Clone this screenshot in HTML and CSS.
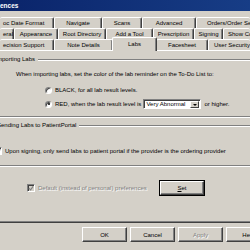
FILE: index.html
```html
<!DOCTYPE html>
<html>
<head>
<meta charset="utf-8">
<link rel="stylesheet" href="styles.css">
</head>
<body>
<div class="titlebar">ences</div>
<div class="tabs">
  <div class="tabrow">
    <div class="tab t1a clip">oc Date Format</div>
    <div class="tab t1b">Navigate</div>
    <div class="tab t1c">Scans</div>
    <div class="tab t1d">Advanced</div>
    <div class="tab t1e open">Orders/Order Sets</div>
  </div>
  <div class="tabrow">
    <div class="tab t2a clip">eral</div>
    <div class="tab t2b">Appearance</div>
    <div class="tab t2c">Root Directory</div>
    <div class="tab t2d">Add a Tool</div>
    <div class="tab t2e">Prescription</div>
    <div class="tab t2f">Signing</div>
    <div class="tab t2g open">Show Codes</div>
  </div>
  <div class="tabrow last">
    <div class="tab t3a clip">ecision Support</div>
    <div class="tab t3b">Note Details</div>
    <div class="tab t3c active">Labs</div>
    <div class="tab t3d">Facesheet</div>
    <div class="tab t3e open">User Security</div>
  </div>
</div>
<div class="panel">
  <div class="group g1">
    <div class="group-title">mporting Labs</div>
    <div class="line intro">When importing labs, set the color of the lab reminder on the To-Do List to:</div>
    <div class="line opt1"><span class="radio"></span>BLACK, for all lab result levels.</div>
    <div class="line opt2"><span class="radio on"></span>RED, when the lab result level is
      <span class="select"><span class="sel-text">Very Abnormal</span><span class="sel-btn"><span class="arrow"></span></span></span>
      or higher.</div>
  </div>
  <div class="group g2">
    <div class="group-title">Sending Labs to PatientPortal</div>
    <div class="line chk-line"><span class="check"><svg width="7" height="7" viewBox="0 0 7 7"><path d="M1 3 L3 5 L6 1" stroke="#000" stroke-width="1.3" fill="none"/></svg></span>Upon signing, only send labs to patient portal if the provider is the ordering provider</div>
  </div>
  <div class="default-row">
    <span class="check disabled"><svg width="7" height="7" viewBox="0 0 7 7"><path d="M1 3 L3 5 L6 1" stroke="#808080" stroke-width="1.3" fill="none"/></svg></span>
    <span class="dis-text">Default (instead of personal) preferences</span>
    <span class="btn set"><u>S</u>et</span>
  </div>
</div>
<div class="buttons">
  <span class="btn ok">OK</span>
  <span class="btn">Cancel</span>
  <span class="btn dis">Apply</span>
  <span class="btn">Help</span>
</div>
</body>
</html>
```
FILE: styles.css
```css
html, body {
  margin: 0;
  padding: 0;
}
body {
  width: 250px;
  height: 250px;
  overflow: hidden;
  background: #d4d0c8;
  font-family: "Liberation Sans", Arial, sans-serif;
  font-size: 6px;
  color: #000;
}
.titlebar {
  height: 11px;
  line-height: 11px;
  background: linear-gradient(to right, #0a246a, #173d86);
  color: #fff;
  font-weight: bold;
  font-size: 6.5px;
  padding-left: 0;
}
.tabs {
  margin-top: 6px;
}
.tabrow {
  display: flex;
  height: 11px;
  white-space: nowrap;
}
.tabrow.last {
  height: 11px;
  position: relative;
  z-index: 1;
}
.tab {
  box-sizing: border-box;
  height: 11px;
  flex: none;
  border-top: 1px solid #fff;
  border-left: 1px solid #fff;
  border-right: 1px solid #404040;
  box-shadow: inset -1px 0 0 #808080;
  border-radius: 2px 2px 0 0;
  text-align: center;
  line-height: 10px;
  overflow: hidden;
  background: #d4d0c8;
}
.tab.clip {
  border-left: none;
  text-align: left;
  padding-left: 3px;
}
.tab.open {
  flex: 1;
  border-right: none;
  box-shadow: none;
  text-align: left;
}
.t1a { width: 54px; }
.t1b { width: 48px; }
.t1c { width: 40px; }
.t1d { width: 54px; }
.t1e { padding-left: 10px; }
.t2a { width: 14px; padding-left: 0; }
.t2b { width: 44px; }
.t2c { width: 48px; }
.t2d { width: 47px; }
.t2e { width: 41px; }
.t2f { width: 29px; }
.t2g { padding-left: 4px; }
.t3a { width: 54px; }
.t3b { width: 59px; }
.t3c { width: 43px; }
.t3d { width: 52px; }
.t3e { padding-left: 5px; }
.tab.active {
  width: 45px;
  margin: -2px -1px -1px -1px;
  height: 14px;
  line-height: 12px;
  position: relative;
  z-index: 2;
}
.panel {
  border-top: 1px solid #fff;
  height: 173px;
  box-sizing: border-box;
  border-bottom: 1px solid #404040;
  box-shadow: inset 0 -1px 0 #808080;
  padding-top: 5px;
}
.group {
  border-bottom: 1px solid #808080;
  box-shadow: 0 1px 0 #fff;
  margin-left: -3px;
}
.group-title {
  display: flex;
  align-items: center;
  height: 7px;
  line-height: 7px;
  gap: 3px;
  white-space: nowrap;
}
.group-title::after {
  content: "";
  flex: 1;
  height: 0;
  border-top: 1px solid #808080;
  border-bottom: 1px solid #fff;
}
.line {
  display: flex;
  align-items: center;
  white-space: nowrap;
}
.g1 {
  height: 61px;
  box-sizing: border-box;
}
.intro {
  margin-top: 7px;
  padding-left: 19px;
  height: 8px;
}
.opt1 {
  margin-top: 8px;
  padding-left: 48px;
  height: 8px;
}
.opt2 {
  margin-top: 5px;
  padding-left: 48px;
  height: 10px;
}
.radio {
  box-sizing: border-box;
  width: 7px;
  height: 7px;
  border-radius: 50%;
  background: #fff;
  border: 1px solid;
  border-color: #808080 #fff #fff #808080;
  box-shadow: inset 1px 1px 0 #404040;
  margin-right: 3px;
  display: inline-flex;
  align-items: center;
  justify-content: center;
}
.radio.on::after {
  content: "";
  width: 2px;
  height: 2px;
  border-radius: 50%;
  background: #000;
}
.select {
  display: inline-flex;
  box-sizing: border-box;
  width: 58px;
  height: 10px;
  margin: 0 3px 0 2px;
  background: #fff;
  border: 1px solid;
  border-color: #808080 #fff #fff #808080;
  box-shadow: inset 1px 1px 0 #404040;
  padding: 1px 1px 1px 2px;
}
.sel-text {
  flex: 1;
  line-height: 7px;
}
.sel-btn {
  box-sizing: border-box;
  width: 9px;
  height: 7px;
  background: #d4d0c8;
  border: 1px solid;
  border-color: #fff #404040 #404040 #fff;
  display: flex;
  align-items: center;
  justify-content: center;
}
.arrow {
  width: 0;
  height: 0;
  border-left: 2px solid transparent;
  border-right: 2px solid transparent;
  border-top: 2px solid #000;
}
.g2 {
  margin-top: 5px;
  height: 44px;
  box-sizing: border-box;
}
.chk-line {
  margin-top: 18px;
  padding-left: 0;
  height: 8px;
}
.check {
  box-sizing: border-box;
  width: 8px;
  height: 8px;
  background: #fff;
  border: 1px solid;
  border-color: #808080 #fff #fff #808080;
  box-shadow: inset 1px 1px 0 #404040;
  display: inline-flex;
  align-items: center;
  justify-content: center;
  margin-left: -3px;
  margin-right: 3px;
  flex: none;
}
.check svg {
  display: block;
}
.check.disabled {
  background: #d4d0c8;
  margin-left: 27px;
}
.default-row {
  display: flex;
  align-items: center;
  margin-top: 15px;
  height: 14px;
  white-space: nowrap;
}
.dis-text {
  color: #808080;
  text-shadow: 1px 1px 0 #fff;
}
.btn {
  box-sizing: border-box;
  display: inline-flex;
  align-items: center;
  justify-content: center;
  width: 45px;
  height: 15px;
  background: #d4d0c8;
  border: 1px solid;
  border-color: #fff #404040 #404040 #fff;
  box-shadow: inset -1px -1px 0 #808080;
  flex: none;
}
.btn.set {
  margin-left: auto;
  margin-right: 46px;
  width: 44px;
  height: 14px;
  outline: 1px solid #000;
}
.buttons {
  display: flex;
  gap: 3px;
  padding-left: 82px;
  margin-top: 4px;
}
.btn.dis {
  color: #808080;
  text-shadow: 1px 1px 0 #fff;
}
```
